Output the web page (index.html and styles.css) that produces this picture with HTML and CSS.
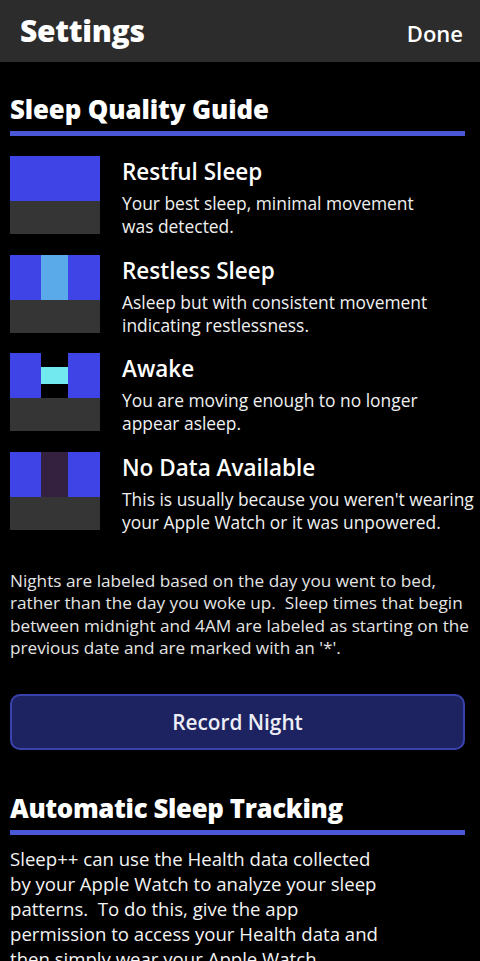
FILE: index.html
```html
<!DOCTYPE html>
<html lang="en">
<head>
<meta charset="utf-8">
<title>Settings</title>
<link rel="stylesheet" href="styles.css">
</head>
<body>
<header class="navbar">
  <h1 class="nav-title">Settings</h1>
  <span class="nav-done">Done</span>
</header>

<main class="content">
  <section class="section section-guide">
    <h2 class="section-title">Sleep Quality Guide</h2>
    <div class="section-rule"></div>

    <ul class="legend">
      <li class="legend-row">
        <div class="swatch">
          <div class="swatch-top">
            <span class="col blue"></span><span class="col blue"></span><span class="col blue"></span>
          </div>
          <div class="swatch-base"></div>
        </div>
        <div class="legend-text">
          <h3 class="legend-title">Restful Sleep</h3>
          <p class="legend-desc">Your best sleep, minimal movement<br>was detected.</p>
        </div>
      </li>
      <li class="legend-row">
        <div class="swatch">
          <div class="swatch-top">
            <span class="col blue"></span><span class="col restless"></span><span class="col blue"></span>
          </div>
          <div class="swatch-base"></div>
        </div>
        <div class="legend-text">
          <h3 class="legend-title">Restless Sleep</h3>
          <p class="legend-desc">Asleep but with consistent movement<br>indicating restlessness.</p>
        </div>
      </li>
      <li class="legend-row">
        <div class="swatch">
          <div class="swatch-top">
            <span class="col blue"></span><span class="col awake"><i class="awake-mark"></i></span><span class="col blue"></span>
          </div>
          <div class="swatch-base"></div>
        </div>
        <div class="legend-text">
          <h3 class="legend-title">Awake</h3>
          <p class="legend-desc">You are moving enough to no longer<br>appear asleep.</p>
        </div>
      </li>
      <li class="legend-row">
        <div class="swatch">
          <div class="swatch-top">
            <span class="col blue"></span><span class="col nodata"></span><span class="col blue"></span>
          </div>
          <div class="swatch-base"></div>
        </div>
        <div class="legend-text">
          <h3 class="legend-title">No Data Available</h3>
          <p class="legend-desc">This is usually because you weren't wearing<br>your Apple Watch or it was unpowered.</p>
        </div>
      </li>
    </ul>

    <p class="note">Nights are labeled based on the day you went to bed,<br>rather than the day you woke up.&nbsp; Sleep times that begin<br>between midnight and 4AM are labeled as starting on the<br>previous date and are marked with an '*'.</p>

    <button class="record-btn" type="button">Record Night</button>
  </section>

  <section class="section section-tracking">
    <h2 class="section-title">Automatic Sleep Tracking</h2>
    <div class="section-rule"></div>
    <p class="body-text">Sleep++ can use the Health data collected<br>by your Apple Watch to analyze your sleep<br>patterns.&nbsp; To do this, give the app<br>permission to access your Health data and<br>then simply wear your Apple Watch<br>to bed.</p>
  </section>
</main>
</body>
</html>
```

FILE: styles.css
```css
* {
  box-sizing: border-box;
}

html, body {
  margin: 0;
  padding: 0;
  background: #000;
}

body {
  font-family: "Open Sans", Lato, "Liberation Sans", sans-serif;
  color: #fff;
  width: 480px;
  height: 961px;
  overflow: hidden;
}

/* top navigation bar */
.navbar {
  height: 62px;
  background: #2c2c2c;
  display: flex;
  align-items: flex-start;
  justify-content: space-between;
  padding: 0 17px 0 20px;
}

.nav-title {
  margin: 0;
  font-size: 30px;
  font-weight: 800;
  line-height: 62px;
  letter-spacing: -0.3px;
}

.nav-done {
  font-size: 22px;
  font-weight: 600;
  line-height: 62px;
  padding-top: 2px;
}

.content {
  padding: 0 15px 0 10px;
}

.section {
  display: flex;
  flex-direction: column;
}

.section-guide {
  padding-top: 30px;
}

.section-tracking {
  margin-top: 41px;
}

.section-title {
  margin: 0;
  font-size: 25.8px;
  font-weight: 800;
  line-height: 34px;
  letter-spacing: -0.35px;
  text-shadow: 0 1px 2px rgba(0, 0, 0, 0.9);
}

.section-guide .section-title {
  letter-spacing: -0.1px;
}

.section-rule {
  height: 5px;
  background: #4a58d8;
  margin-top: 5px;
}

/* colour legend */
.legend {
  list-style: none;
  margin: 20px 0 0;
  padding: 0;
  display: flex;
  flex-direction: column;
  gap: 20.7px;
}

.legend-row {
  height: 78px;
  display: flex;
  gap: 22px;
  align-items: flex-start;
}

.swatch {
  width: 90px;
  flex: none;
  display: flex;
  flex-direction: column;
}

.swatch-top {
  height: 45px;
  display: grid;
  grid-template-columns: 31px 27px 32px;
}

.swatch-base {
  height: 33px;
  background: #353535;
}

.col.blue { background: #3f44e6; }
.col.restless { background: #5aaaea; }
.col.nodata { background: #34203f; }

.col.awake {
  background: #000;
  padding-top: 14px;
}

.awake-mark {
  display: block;
  height: 17px;
  background: #72e8ef;
}

.legend-text {
  flex: 1;
  min-width: 0;
  padding-top: 2px;
}

.legend-title {
  margin: 0;
  font-size: 22.5px;
  font-weight: 600;
  line-height: 27px;
}

.legend-desc {
  margin: 7px 0 0;
  font-size: 17.4px;
  line-height: 23px;
  color: #f0f0f0;
  white-space: nowrap;
}

.note {
  margin: 40px 0 0;
  font-size: 17.2px;
  line-height: 22.3px;
  color: #e4e4e4;
  white-space: nowrap;
}

.record-btn {
  margin-top: 35px;
  height: 56px;
  border: 2px solid #3a43ad;
  border-radius: 10px;
  background: #1d2361;
  color: #ecedf5;
  font-family: inherit;
  font-size: 20.8px;
  font-weight: 600;
}

.body-text {
  margin: 11px 0 0;
  font-size: 18.6px;
  line-height: 25px;
  color: #f4f4f4;
  white-space: nowrap;
}
```
